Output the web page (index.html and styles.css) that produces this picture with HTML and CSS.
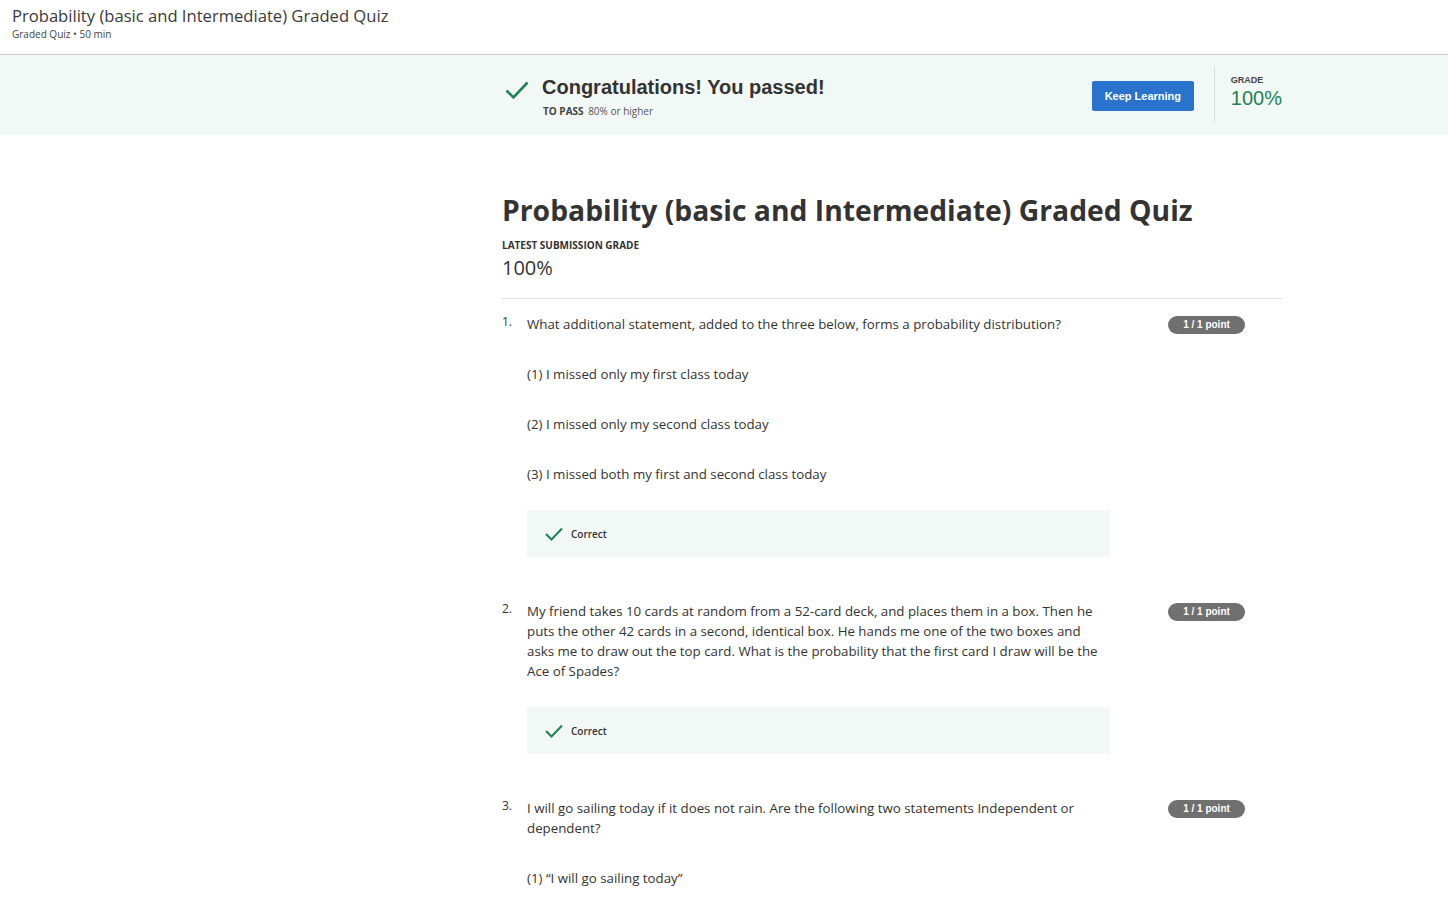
FILE: index.html
```html
<!DOCTYPE html>
<html lang="en">
<head>
<meta charset="utf-8">
<title>Probability (basic and Intermediate) Graded Quiz</title>
<link rel="stylesheet" href="styles.css">
</head>
<body>
<header class="topbar">
  <div class="topbar-title">Probability (basic and Intermediate) Graded Quiz</div>
  <div class="topbar-sub">Graded Quiz • 50 min</div>
</header>

<section class="banner">
  <div class="banner-inner">
    <div class="banner-left">
      <svg class="banner-check" width="24" height="20" viewBox="0 0 24 20"><path d="M1.5 10.5 L8.5 17.5 L22.5 2.5" fill="none" stroke="#1f8354" stroke-width="2.6"/></svg>
      <div class="banner-text">
        <div class="banner-heading">Congratulations! You passed!</div>
        <div class="banner-pass"><span class="pass-label">TO PASS</span> 80% or higher</div>
      </div>
    </div>
    <div class="banner-right">
      <button class="keep-btn">Keep Learning</button>
      <div class="vdivider"></div>
      <div class="grade">
        <div class="grade-label">GRADE</div>
        <div class="grade-value">100%</div>
      </div>
    </div>
  </div>
</section>

<main class="content">
  <h1 class="quiz-title">Probability (basic and Intermediate) Graded Quiz</h1>
  <div class="latest-label">LATEST SUBMISSION GRADE</div>
  <div class="latest-value">100%</div>
  <hr class="rule">

  <div class="question">
    <div class="qnum">1.</div>
    <div class="qbody">
      <p class="qtext">What additional statement, added to the three below, forms a probability distribution?</p>
      <p class="option">(1) I missed only my first class today</p>
      <p class="option">(2) I missed only my second class today</p>
      <p class="option">(3) I missed both my first and second class today</p>
      <div class="feedback">
        <svg width="18" height="14" viewBox="0 0 18 14"><path d="M1 7 L6.5 12.5 L17 1.5" fill="none" stroke="#1f8354" stroke-width="2"/></svg>
        <span>Correct</span>
      </div>
    </div>
    <div class="points">1 / 1 point</div>
  </div>

  <div class="question">
    <div class="qnum">2.</div>
    <div class="qbody">
      <p class="qtext">My friend takes 10 cards at random from a 52-card deck, and places them in a box. Then he puts the other 42 cards in a second, identical box. He hands me one of the two boxes and asks me to draw out the top card. What is the probability that the first card I draw will be the Ace of Spades?</p>
      <div class="feedback">
        <svg width="18" height="14" viewBox="0 0 18 14"><path d="M1 7 L6.5 12.5 L17 1.5" fill="none" stroke="#1f8354" stroke-width="2"/></svg>
        <span>Correct</span>
      </div>
    </div>
    <div class="points">1 / 1 point</div>
  </div>

  <div class="question">
    <div class="qnum">3.</div>
    <div class="qbody">
      <p class="qtext">I will go sailing today if it does not rain. Are the following two statements Independent or dependent?</p>
      <p class="option">(1) “I will go sailing today”</p>
    </div>
    <div class="points">1 / 1 point</div>
  </div>
</main>
</body>
</html>
```

FILE: styles.css
```css
* { box-sizing: border-box; }
html, body { margin: 0; padding: 0; background: #fff; }
body {
  font-family: "Open Sans", "Liberation Sans", sans-serif;
  color: #373a3c;
}

.topbar {
  height: 55px;
  padding: 5px 12px 0;
  border-bottom: 1px solid #c9c9c9;
}
.topbar-title {
  font-size: 16.6px;
  line-height: 22px;
  color: #3a3a3a;
}
.topbar-sub {
  font-size: 10px;
  line-height: 14px;
  color: #444;
}

.banner {
  background: #f2f8f6;
  height: 80px;
}
.banner-inner {
  margin-left: 502px;
  width: 780px;
  height: 100%;
  display: flex;
  align-items: center;
  justify-content: space-between;
}
.banner-left {
  display: flex;
  align-items: flex-start;
  padding-top: 2px;
}
.banner-check { margin: 5px 0 0 3px; }
.banner-text { margin-left: 13px; }
.banner-heading {
  font-family: "Liberation Sans", Arial, sans-serif;
  font-weight: bold;
  font-size: 20px;
  line-height: 24px;
  color: #333;
}
.banner-pass {
  font-size: 10px;
  line-height: 14px;
  margin-top: 5px;
  margin-left: 1px;
  color: #555;
}
.pass-label { font-weight: bold; color: #444; margin-right: 2px; }

.banner-right {
  display: flex;
  align-items: center;
  height: 56px;
  padding-bottom: 2px;
}
.keep-btn {
  font-family: "Liberation Sans", Arial, sans-serif;
  font-weight: bold;
  font-size: 11px;
  color: #fff;
  background: #2a73cc;
  border: none;
  border-radius: 2px;
  width: 102px;
  height: 30px;
  padding: 0;
  margin-top: 4px;
}
.vdivider {
  width: 1px;
  height: 56px;
  background: #dcdcdc;
  margin: 0 16px 0 20px;
}
.grade { margin-top: -5px; }
.grade-label {
  font-family: "Liberation Sans", Arial, sans-serif;
  font-weight: bold;
  font-size: 9px;
  line-height: 12px;
  color: #444;
}
.grade-value {
  font-family: "Liberation Sans", Arial, sans-serif;
  font-size: 20px;
  line-height: 22px;
  margin-top: 1px;
  color: #1f8354;
}

.content {
  margin-left: 502px;
  width: 780px;
  padding-top: 56px;
}
.quiz-title {
  font-size: 28.3px;
  font-weight: bold;
  line-height: 38px;
  margin: 0;
  color: #333;
}
.latest-label {
  font-size: 10px;
  font-weight: bold;
  line-height: 12px;
  margin-top: 10px;
  color: #333;
}
.latest-value {
  font-size: 20px;
  line-height: 24px;
  margin-top: 5px;
  color: #333;
}
.rule {
  border: none;
  border-top: 1px solid #dedede;
  margin: 18px 0 0;
}

.question {
  display: flex;
  align-items: flex-start;
  padding-top: 15px;
  padding-bottom: 29px;
}
.qnum {
  width: 25px;
  font-size: 12px;
  line-height: 20px;
  margin-top: -2px;
  color: #333;
}
.qbody { width: 583px; }
.qtext, .option {
  font-size: 13.3px;
  line-height: 20px;
  margin: 0;
  color: #333;
}
.option { margin-top: 30px; }
.feedback {
  margin-top: 26px;
  height: 47px;
  background: #f2f8f6;
  display: flex;
  align-items: center;
  padding-left: 18px;
}
.feedback span {
  font-size: 10px;
  font-weight: 600;
  color: #333;
  margin-left: 8px;
}
.points {
  margin-left: 58px;
  margin-top: 2px;
  width: 77px;
  height: 18px;
  border-radius: 9px;
  background: #707070;
  color: #fff;
  font-family: "Liberation Sans", Arial, sans-serif;
  font-weight: bold;
  font-size: 10px;
  line-height: 18px;
  text-align: center;
}
```
